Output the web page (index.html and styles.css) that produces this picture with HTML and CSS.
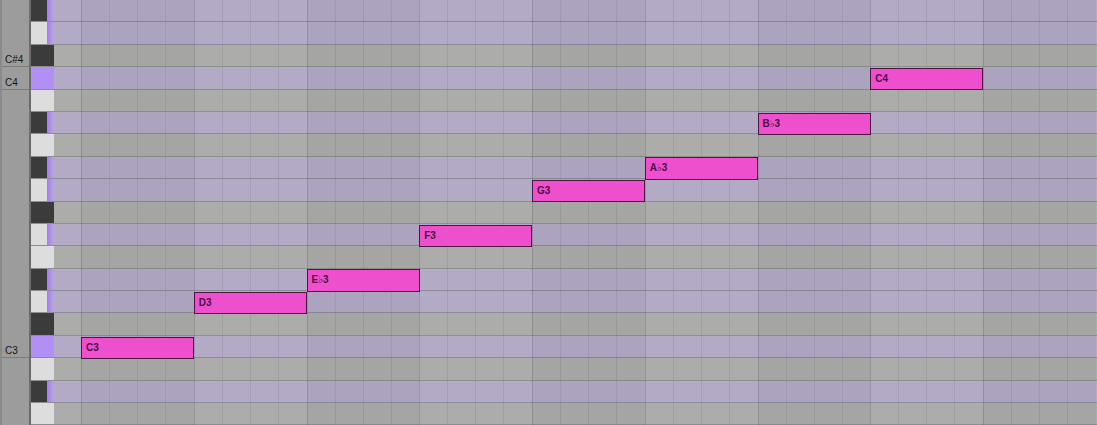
FILE: index.html
```html
<!DOCTYPE html>
<html>

	<head>
		<meta charset="UTF-8">
		<title>Piano Roll</title>
		<link rel="stylesheet" href="styles.css">
	</head>

	<body>
		<div class="roll">
			<!-- note names on the far left -->
			<div class="gutter">
				<div class="lane"></div>
				<div class="lane"></div>
				<div class="lane named">C#4</div>
				<div class="lane named">C4</div>
				<div class="lane"></div>
				<div class="lane"></div>
				<div class="lane"></div>
				<div class="lane"></div>
				<div class="lane"></div>
				<div class="lane"></div>
				<div class="lane"></div>
				<div class="lane"></div>
				<div class="lane"></div>
				<div class="lane"></div>
				<div class="lane"></div>
				<div class="lane named">C3</div>
				<div class="lane"></div>
				<div class="lane"></div>
				<div class="lane"></div>
			</div>

			<!-- keyboard, Eb4 down to A2 -->
			<div class="keys">
				<div class="key black in"></div>
				<div class="key white in"></div>
				<div class="key black"></div>
				<div class="key root"></div>
				<div class="key white"></div>
				<div class="key black in"></div>
				<div class="key white"></div>
				<div class="key black in"></div>
				<div class="key white in"></div>
				<div class="key black"></div>
				<div class="key white in"></div>
				<div class="key white"></div>
				<div class="key black in"></div>
				<div class="key white in"></div>
				<div class="key black"></div>
				<div class="key root"></div>
				<div class="key white"></div>
				<div class="key black in"></div>
				<div class="key white"></div>
			</div>

			<div class="grid">
				<div class="row in"></div>
				<div class="row in"></div>
				<div class="row"></div>
				<div class="row in"></div>
				<div class="row"></div>
				<div class="row in"></div>
				<div class="row"></div>
				<div class="row in"></div>
				<div class="row in"></div>
				<div class="row"></div>
				<div class="row in"></div>
				<div class="row"></div>
				<div class="row in"></div>
				<div class="row in"></div>
				<div class="row"></div>
				<div class="row in"></div>
				<div class="row"></div>
				<div class="row in"></div>
				<div class="row"></div>

				<!-- beat columns laid over the lanes -->
				<div class="beats">
					<div class="lead"></div>
					<div class="beat"></div>
					<div class="beat"></div>
					<div class="beat"></div>
					<div class="beat"></div>
					<div class="beat"></div>
					<div class="beat"></div>
					<div class="beat"></div>
					<div class="beat"></div>
					<div class="beat"></div>
				</div>

				<!-- clip notes: left = step * 112.75, top = row * 22.4 -->
				<div class="note" style="left:27px;top:336.5px">C3</div>
				<div class="note" style="left:139.75px;top:291.7px">D3</div>
				<div class="note" style="left:252.5px;top:269.3px">E&#9837;3</div>
				<div class="note" style="left:365.25px;top:224.5px">F3</div>
				<div class="note" style="left:478px;top:179.7px">G3</div>
				<div class="note" style="left:590.75px;top:157.3px">A&#9837;3</div>
				<div class="note" style="left:703.5px;top:112.5px">B&#9837;3</div>
				<div class="note" style="left:816.25px;top:67.7px">C4</div>
			</div>
		</div>
	</body>

</html>
```

FILE: styles.css
```css
* {
	margin: 0;
	padding: 0;
	box-sizing: border-box;
}

body {
	background: #9b9b9b;
	font-family: "Liberation Sans", "DejaVu Sans", sans-serif;
	overflow: hidden;
}

.roll {
	display: flex;
	width: 1097px;
	height: 425px;
	overflow: hidden;
}

/* label column */
.gutter {
	width: 31px;
	display: grid;
	grid-template-rows: repeat(19, 22.4px);
	background: #9c9c9c;
	border-left: 2px solid #8a8a8a;
	border-right: 2px solid #6c6c6c;
}

.lane {
	font-size: 10px;
	color: #161616;
	padding-left: 3px;
	display: flex;
	align-items: flex-end;
	padding-bottom: 1px;
}

.lane.named {
	border-bottom: 1px solid #7c7c7c;
}

/* keyboard */
.keys {
	width: 23px;
	display: grid;
	grid-template-rows: repeat(19, 22.4px);
	background: #8e8e8e;
}

.key {
	border-bottom: 1px solid #8e8e8e;
}

.key.white {
	background: #dddddd;
}

.key.black {
	background: #3b3b3b;
}

.key.in {
	background-size: 16px 100%, 100% 100%;
	background-repeat: no-repeat;
}

.key.white.in {
	background-image: linear-gradient(#dddddd, #dddddd), linear-gradient(90deg, #a67cf4 16px, #b9a6dc 23px);
}

.key.black.in {
	background-image: linear-gradient(#3b3b3b, #3b3b3b), linear-gradient(90deg, #a67cf4 16px, #b9a6dc 23px);
}

.key.root {
	background: #b18ff5;
}

/* note lanes */
.grid {
	flex: 1;
	position: relative;
	display: grid;
	grid-template-rows: repeat(19, 22.4px);
}

.row {
	background: #acacab;
	border-bottom: 1px solid #8f8f90;
}

.row.in {
	background: #b3aac5;
	border-bottom-color: #8e899b;
}

.beats {
	position: absolute;
	left: 0;
	top: 0;
	bottom: 0;
	display: flex;
	pointer-events: none;
}

.lead {
	width: 27px;
	flex: none;
}

.beat {
	width: 112.75px;
	flex: none;
	border-left: 1px solid rgba(60, 50, 80, 0.2);
	background-image:
		linear-gradient(90deg, transparent 27px, rgba(60, 55, 80, 0.11) 27px 28px, transparent 28px 55px, rgba(60, 55, 80, 0.11) 55px 56px, transparent 56px 83px, rgba(60, 55, 80, 0.11) 83px 84px, transparent 84px);
}

.beat:nth-child(even) {
	background-color: rgba(0, 0, 0, 0.035);
}

.note {
	position: absolute;
	z-index: 2;
	width: 113px;
	height: 22.4px;
	background: #ee4fcd;
	border: 1px solid #4b1740;
	color: #4e0f44;
	font-size: 10px;
	font-weight: bold;
	line-height: 20px;
	padding-left: 4px;
}
```
